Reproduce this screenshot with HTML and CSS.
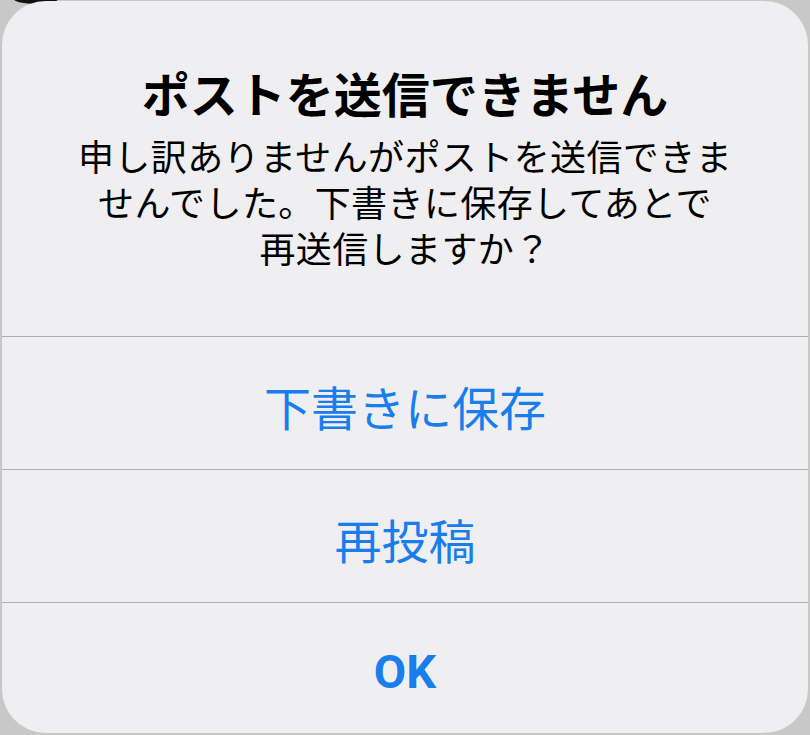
FILE: index.html
```html
<!DOCTYPE html>
<html lang="ja">
<head>
<meta charset="utf-8">
<link rel="stylesheet" href="styles.css">
</head>
<body>
<div class="backdrop-blob"></div>
<div class="alert">
  <div class="alert-header">
    <div class="alert-title">ポストを送信できません</div>
    <div class="alert-message">申し訳ありませんがポストを送信できま<br>せんでした。下書きに保存してあとで<br>再送信しますか？</div>
  </div>
  <div class="alert-action">下書きに保存</div>
  <div class="alert-action">再投稿</div>
  <div class="alert-action alert-action-primary">OK</div>
</div>
</body>
</html>
```
FILE: styles.css
```css
html, body {
  margin: 0;
  padding: 0;
}
body {
  width: 810px;
  height: 735px;
  background: #c8c8c8;
  position: relative;
  overflow: hidden;
  font-family: "Noto Sans CJK JP", "Noto Sans", sans-serif;
}
.backdrop-blob {
  position: absolute;
  left: 14px;
  top: -6px;
  width: 44px;
  height: 10px;
  border-radius: 50%;
  background: #111;
}
.alert {
  position: relative;
  margin: 1px 2px 0 2px;
  height: 732px;
  background: #efeff1;
  border-radius: 44px;
  display: flex;
  flex-direction: column;
  overflow: hidden;
}
.alert-header {
  padding: 63px 10px 66px;
  text-align: center;
  color: #000;
}
.alert-title {
  font-size: 48px;
  font-weight: 700;
  line-height: 56px;
}
.alert-message {
  margin-top: 12px;
  font-size: 36px;
  letter-spacing: 0.4px;
  line-height: 46px;
  font-weight: 400;
}
.alert-action {
  border-top: 1px solid #aeaeb0;
  display: flex;
  align-items: center;
  justify-content: center;
  padding-top: 4px;
  box-sizing: border-box;
  height: 133px;
  flex-shrink: 0;
  color: #1a7dec;
  font-size: 47px;
}
.alert-action-primary {
  flex: 1;
  font-family: Roboto, "Liberation Sans", sans-serif;
  font-weight: 700;
  font-size: 47px;
  padding-top: 6px;
}
```
